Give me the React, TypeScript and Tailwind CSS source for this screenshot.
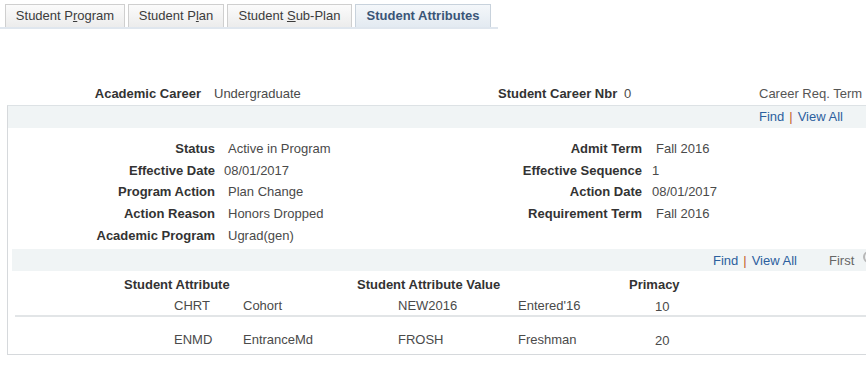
const font = { fontFamily: '"Liberation Sans", Arial, sans-serif' };

function Tab({ children, active, w }: { children: React.ReactNode; active?: boolean; w: string }) {
  return (
    <div
      className={`${w} h-[23px] flex items-center justify-center border border-b-0 text-[13px] ${
        active
          ? 'bg-gradient-to-b from-[#f4f7fa] to-[#e3eaf1] border-[#c8d2dc] text-[#3a5577] font-bold'
          : 'bg-gradient-to-b from-[#fbfbfb] to-[#ececec] border-[#cfcfcf] text-[#3c3c3c]'
      }`}
    >
      {children}
    </div>
  );
}

function Field({ label, value, lw, gap }: { label: string; value: string; lw: string; gap: string }) {
  return (
    <div className="flex items-center h-[21.7px]">
      <span className={`${lw} text-right font-bold text-[#333]`}>{label}</span>
      <span className={`${gap} text-[#4a4a4a]`}>{value}</span>
    </div>
  );
}

function FindBar({ pl, first }: { pl: string; first?: boolean }) {
  return (
    <div className={`h-[22px] bg-[#f0f4f5] flex items-center ${pl} text-[13px] whitespace-nowrap`}>
      <span className="text-[#2c5f9e]">Find</span>
      <span className="text-[#c3622b] mx-[5px]">|</span>
      <span className="text-[#2c5f9e]">View All</span>
      {first && (
        <>
          <span className="ml-[32px] text-[#666]">First</span>
          <span className="ml-[9px] w-[12px] h-[12px] rounded-full border-2 border-[#b8b8b8] shrink-0 -mt-[6px]" />
        </>
      )}
    </div>
  );
}

export default function App() {
  return (
    <div className="w-[866px] h-[374px] overflow-hidden bg-white text-[13px] text-[#333]" style={font}>
      {/* tabs */}
      <div className="pt-[4px] pl-[5px] w-[498px] border-b-2 border-[#dfe6ee] flex gap-[3px]">
        <Tab w="w-[120px]">
          <span>
            Student P<u>r</u>ogram
          </span>
        </Tab>
        <Tab w="w-[96px]">
          <span>
            Student P<u>l</u>an
          </span>
        </Tab>
        <Tab w="w-[125px]">
          <span>
            Student <u>S</u>ub-Plan
          </span>
        </Tab>
        <Tab w="w-[136px]" active>
          <span>Student Attributes</span>
        </Tab>
      </div>

      {/* career header */}
      <div className="mt-[57px] h-[16px] flex items-center whitespace-nowrap">
        <span className="w-[201px] text-right font-bold">Academic Career</span>
        <span className="ml-[13px] w-[284px] text-[#4a4a4a]">Undergraduate</span>
        <span className="w-[111px] text-right font-bold">Student Career Nbr</span>
        <span className="ml-[15px] w-[135px] text-[#4a4a4a]">0</span>
        <span className="text-[#555]">Career Req. Term</span>
      </div>

      {/* program box */}
      <div className="mt-[3px] ml-[7px] w-[900px] h-[250px] border border-[#d6d9dc] border-t-[#dde2e5]">
        <FindBar pl="pl-[751px]" />

        <div className="flex pt-[10px] whitespace-nowrap">
          <div className="w-[400px]">
            <Field label="Status" value="Active in Program" lw="w-[207px]" gap="ml-[13px]" />
            <Field label="Effective Date" value="08/01/2017" lw="w-[207px]" gap="ml-[9px]" />
            <Field label="Program Action" value="Plan Change" lw="w-[207px]" gap="ml-[13px]" />
            <Field label="Action Reason" value="Honors Dropped" lw="w-[207px]" gap="ml-[13px]" />
            <Field label="Academic Program" value="Ugrad(gen)" lw="w-[207px]" gap="ml-[13px]" />
          </div>
          <div>
            <Field label="Admit Term" value="Fall 2016" lw="w-[234px]" gap="ml-[14px]" />
            <Field label="Effective Sequence" value="1" lw="w-[234px]" gap="ml-[10px]" />
            <Field label="Action Date" value="08/01/2017" lw="w-[234px]" gap="ml-[10px]" />
            <Field label="Requirement Term" value="Fall 2016" lw="w-[234px]" gap="ml-[14px]" />
          </div>
        </div>

        {/* attributes */}
        <div className="ml-[4px] mt-[3px]">
          <FindBar pl="pl-[701px]" first />
          <div className="flex items-center h-[14px] mt-[6px] font-bold whitespace-nowrap">
            <span className="ml-[112px] w-[233px]">Student Attribute</span>
            <span className="w-[272px]">Student Attribute Value</span>
            <span>Primacy</span>
          </div>
          {[
            ['CHRT', 'Cohort', 'NEW2016', "Entered'16", '10'],
            ['ENMD', 'EntranceMd', 'FROSH', 'Freshman', '20'],
          ].map((r, i) => (
            <div
              key={r[0]}
              className={`flex items-center h-[14px] whitespace-nowrap text-[#4a4a4a] ${
                i === 0 ? 'mt-[7px]' : 'mt-[20px]'
              }`}
            >
              <span className="ml-[162px] w-[69px]">{r[0]}</span>
              <span className="w-[155px]">{r[1]}</span>
              <span className="w-[120px]">{r[2]}</span>
              <span className="w-[137px]">{r[3]}</span>
              <span className="mt-[2px]">{r[4]}</span>
            </div>
          ))}
        </div>
        <div className="ml-[7px] -mt-[31px] h-[2px] bg-[#e2e5e7]" />
      </div>
    </div>
  );
}
